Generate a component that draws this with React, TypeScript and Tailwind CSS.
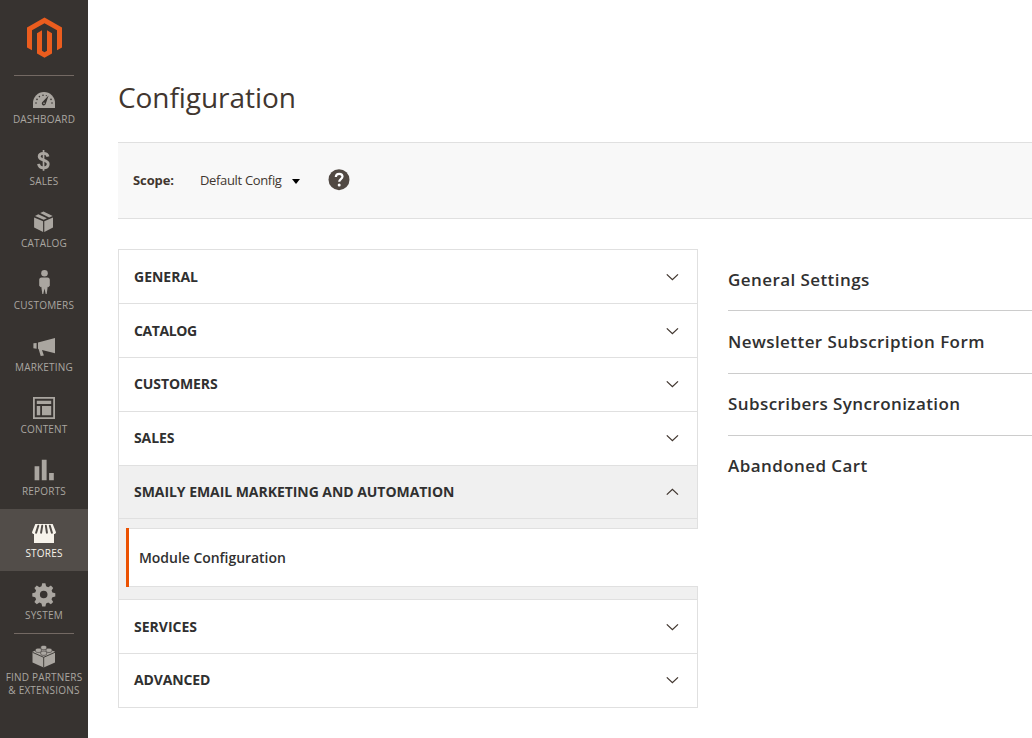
import React from "react";

function NavIcon({ children }: { children: React.ReactNode }) {
  return (
    <svg viewBox="24 8 40 28" width="40" height="28" fill="currentColor" className="block shrink-0">
      {children}
    </svg>
  );
}

const DARK = "#373330";

const DashboardIcon = () => (
  <NavIcon>
    <path d="M33 33V28a11 11 0 0 1 22 0v5z" />
    <g fill={DARK}>
      <path d="M48.6 20.6 45.7 29a2 2 0 1 1-3.3-2z" />
      <circle cx="36" cy="28" r=".8" />
      <circle cx="37" cy="24.4" r=".8" />
      <circle cx="39.4" cy="21.6" r=".8" />
      <circle cx="43" cy="20.2" r=".8" />
      <circle cx="46.3" cy="20.6" r=".6" />
      <circle cx="51" cy="24.4" r=".8" />
      <circle cx="52" cy="28" r=".8" />
    </g>
    <circle cx="44" cy="28.2" r=".8" />
  </NavIcon>
);

const SalesIcon = () => (
  <NavIcon>
    <path
      d="M48 19.6C47.6 17.6 46 16.4 43.5 16.4c-2.6 0-4.3 1.2-4.3 3.2 0 4.6 9 2.4 9 7.4 0 2.3-1.9 3.8-4.7 3.8-2.9 0-4.6-1.5-4.9-4"
      fill="none"
      stroke="currentColor"
      strokeWidth="2.9"
    />
    <path d="M42.7 13h1.7v20.8h-1.7z" />
  </NavIcon>
);

const CatalogIcon = () => (
  <NavIcon>
    <path d="M34.1 18.5l9 3.7V33l-9-4.5zM53 18.5l-8.7 3.7V33l8.7-4.5zM35 17l3.3-1.8 8.6 4.1-3.2 1.5zM40.2 14.1l3.3-1.7 9.2 4.5-3.6 1.5z" />
  </NavIcon>
);

const CustomersIcon = () => (
  <NavIcon>
    <circle cx="44.5" cy="12.3" r="3.3" />
    <path d="M41.5 16.6h6c1.5 0 2.3 1 2.3 2.5v5.6l-1.5 1.6-.6-.6-1 7.3h-1l-1.2-5.4-1.2 5.4h-1l-1-7.3-.6.6-1.5-1.6v-5.6c0-1.5.8-2.5 2.3-2.5z" />
  </NavIcon>
);

const MarketingIcon = () => (
  <NavIcon>
    <path d="M33.4 20.3l3.2-.4v5.8l-3.2-.5zM38 19.4l17-4.4v15.2l-13-3.1 1.9 5.3-3.2.6-2.1-7.1-.6-.2z" />
  </NavIcon>
);

const ContentIcon = () => (
  <NavIcon>
    <path fillRule="evenodd" d="M33 12h22v22H33zM34.8 13.8v18.4h18.4V13.8z" />
    <path d="M36.8 15.8h14.4v3.2H36.8zM36.8 21h3.4v9.2h-3.4zM42 21h9.2v9.2H42z" />
  </NavIcon>
);

const ReportsIcon = () => (
  <NavIcon>
    <path d="M34.6 19.3h4.7v13.9h-4.7zM41.8 12.8h4.8v20.4h-4.8zM49.1 26h4.7v7.2h-4.7z" />
  </NavIcon>
);

const StoresIcon = () => (
  <NavIcon>
    <path d="M35.3 15h17.4L56 23.2c0 1.1-.9 1.8-2 1.8v9H34v-9c-1.1 0-2-.7-2-1.8z" />
    <path
      d="M38.3 16.8l-2.2 6.9M42.2 16.8l-1.1 6.9M45.9 16.8l1 6.9M49.8 16.8l2.1 6.9"
      stroke="#524d49"
      strokeWidth="2"
      strokeLinecap="round"
    />
  </NavIcon>
);

const SystemIcon = () => (
  <NavIcon>
    <path
      fillRule="evenodd"
      d="M42.2 12.3h3.2l.7 3 2.1.9 2.7-1.7 2.3 2.4-1.6 2.6.8 2.1 2.9.6v3.3l-2.9.7-.9 2.1 1.7 2.6-2.3 2.3-2.7-1.6-2.1.8-.7 3h-3.2l-.7-3-2.1-.8-2.6 1.6-2.4-2.3 1.7-2.6-.9-2.1-2.9-.7v-3.3l2.9-.6.9-2.1-1.7-2.6 2.4-2.4 2.6 1.7 2.1-.9zM43.7 19.7a3.8 3.8 0 1 0 0 7.6 3.8 3.8 0 0 0 0-7.6z"
    />
  </NavIcon>
);

const PartnersIcon = () => (
  <NavIcon>
    <path d="M32.5 18.8l11.2-5 11.3 5v10.6l-11.3 5.1-11.2-5.1z" />
    <path d="M32.5 19.3l11.2 5 11.3-5M43.7 24.3v10.2" stroke={DARK} strokeWidth=".9" fill="none" />
    <g stroke={DARK} strokeWidth=".6">
      <path d="M40.7 13.9v1.2c0 2.1 6 2.1 6 0v-1.2c0-2-6-2-6 0z" />
      <path d="M35.4 16.7v1.2c0 2.1 6 2.1 6 0v-1.2c0-2-6-2-6 0z" />
      <path d="M46 16.7v1.2c0 2.1 6 2.1 6 0v-1.2c0-2-6-2-6 0z" />
      <path d="M40.7 19.6v1.2c0 2.1 6 2.1 6 0v-1.2c0-2-6-2-6 0z" />
    </g>
  </NavIcon>
);

const navItems = [
  { label: "DASHBOARD", Icon: DashboardIcon },
  { label: "SALES", Icon: SalesIcon },
  { label: "CATALOG", Icon: CatalogIcon },
  { label: "CUSTOMERS", Icon: CustomersIcon },
  { label: "MARKETING", Icon: MarketingIcon },
  { label: "CONTENT", Icon: ContentIcon },
  { label: "REPORTS", Icon: ReportsIcon },
  { label: "STORES", Icon: StoresIcon, active: true },
  { label: "SYSTEM", Icon: SystemIcon },
];

function Sidebar() {
  return (
    <nav className="flex h-full w-[88px] shrink-0 flex-col bg-[#373330] text-[10px] leading-[13px] text-[#aaa6a0]">
      <a className="flex h-[75px] shrink-0 justify-center pt-[17px]">
        <svg viewBox="0 0 35 41" width="35" height="41" fill="#eb5d1e" className="ml-px block">
          <path d="M17.5 0.5L35 10.4v20l-5 2.9V13.3L17.5 6.2 5 13.3v20l-5-2.9v-20z" />
          <path d="M10 16.2l5-2.9v20.4l2.5 1.5 2.5-1.5V13.3l5 2.9v20.2L17.5 40.7 10 36.4z" />
        </svg>
      </a>
      <div className="mx-[14px] -mb-px h-px shrink-0 bg-[#736963]" />
      {navItems.map(({ label, Icon, active }) => (
        <a
          key={label}
          className={`flex h-[62px] shrink-0 flex-col items-center pt-2 ${active ? "bg-[#524d49] text-[#f7f3eb]" : ""}`}
        >
          <Icon />
          <span className="mt-[2px] tracking-[0.2px]">{label}</span>
        </a>
      ))}
      <div className="mx-[14px] -mb-px h-px shrink-0 bg-[#736963]" />
      <a className="flex shrink-0 flex-col items-center pt-2 text-center">
        <PartnersIcon />
        <span className="mt-[2px] whitespace-nowrap tracking-[0.2px]">
          FIND PARTNERS
          <br />& EXTENSIONS
        </span>
      </a>
    </nav>
  );
}

function Chevron({ up }: { up?: boolean }) {
  return (
    <svg viewBox="0 0 14 8" width="14" height="8" fill="none" stroke="#41362f" strokeWidth="1.3" className="block">
      <path d={up ? "M1.8 6.6L7.4 1.3l5.6 5.3" : "M1.8 1.4L7.4 6.7l5.6-5.3"} />
    </svg>
  );
}

function TabTitle({ label, open, className }: { label: string; open?: boolean; className: string }) {
  return (
    <div
      className={`flex items-center justify-between border-t border-[#e0e0e0] pr-[18px] pl-[15px] text-sm font-bold text-[#303030] ${
        open ? "h-[53px] bg-[#f0f0f0]" : "h-[54px]"
      } ${className}`}
    >
      {label}
      <Chevron up={open} />
    </div>
  );
}

function ConfigTabs() {
  return (
    <div className="h-[459px] w-[580px] shrink-0 border-b border-[#e0e0e0]">
      <div className="border-x border-[#e0e0e0]">
        <TabTitle label="GENERAL" className="pt-px" />
        <TabTitle label="CATALOG" className="pt-px tracking-[-0.38px]" />
        <TabTitle label="CUSTOMERS" className="pb-px tracking-[-0.1px]" />
        <TabTitle label="SALES" className="pb-px tracking-[-0.1px]" />
        <TabTitle label="SMAILY EMAIL MARKETING AND AUTOMATION" open className="pb-px tracking-[-0.05px]" />
      </div>
      <div className="h-[10px] border-x border-t border-[#e0e0e0] bg-[#f0f0f0]" />
      <div className="flex h-[59px] border-l border-[#e0e0e0] bg-[#f0f0f0] pl-[7px]">
        <div className="flex flex-1 border-l-[3px] border-[#eb5202]">
          <div className="flex flex-1 items-center border-y border-[#e0e0e0] bg-white pl-[10px] text-sm font-semibold tracking-[-0.04px] text-[#303030]">
            Module Configuration
          </div>
        </div>
      </div>
      <div className="h-[12px] border-x border-[#e0e0e0] bg-[#f0f0f0]" />
      <div className="border-x border-[#e0e0e0]">
        <TabTitle label="SERVICES" className="pt-px" />
        <TabTitle label="ADVANCED" className="pb-px tracking-[-0.12px]" />
      </div>
    </div>
  );
}

const sections = [
  { title: "General Settings", box: "h-[62px] pt-px" },
  { title: "Newsletter Subscription Form", box: "h-[63px]" },
  { title: "Subscribers Syncronization", box: "h-[62px] pb-px" },
];

export default function App() {
  return (
    <div className="flex h-[738px] w-[1032px] overflow-hidden bg-white font-['Open_Sans',sans-serif]">
      <Sidebar />
      <main className="flex min-w-0 flex-1 flex-col pl-[30px]">
        <h1 className="mt-[78px] h-[38px] text-[28px] leading-[38px] tracking-[-0.06px] text-[#41362f]">
          Configuration
        </h1>
        <div className="mt-[26px] flex h-[77px] shrink-0 items-center border-y border-[#e0e0e0] bg-[#f8f8f8] pl-[15px] text-[13px] text-[#41362f]">
          <span className="font-bold tracking-[-0.1px]">Scope:</span>
          <span className="ml-[26px] tracking-[-0.33px]">Default Config</span>
          <svg viewBox="0 0 8 5" width="8" height="5" className="mt-[2px] ml-[10.5px] block">
            <path d="M0 0h8L4 5z" />
          </svg>
          <span className="mb-[2px] ml-[28px] block">
            <svg viewBox="0 0 22 22" width="22" height="22" className="block">
              <circle cx="11" cy="10.7" r="10.5" fill="#514943" />
              <path
                d="M7.8 8c.1-2 1.4-3.2 3.4-3.2s3.3 1.1 3.3 2.8c0 2.5-3.3 2.6-3.3 5.2"
                fill="none"
                stroke="#fff"
                strokeWidth="2.2"
              />
              <circle cx="11.2" cy="15.9" r="1.5" fill="#fff" />
            </svg>
          </span>
        </div>
        <div className="mt-[30px] flex">
          <ConfigTabs />
          <div className="ml-[30px] flex-1 text-[17px] font-semibold tracking-[0.425px] text-[#303030]">
            {sections.map(({ title, box }) => (
              <div key={title} className={`flex items-center border-b border-[#cccccc] ${box}`}>
                {title}
              </div>
            ))}
            <div className="flex h-[60px] items-center">Abandoned Cart</div>
          </div>
        </div>
      </main>
    </div>
  );
}
